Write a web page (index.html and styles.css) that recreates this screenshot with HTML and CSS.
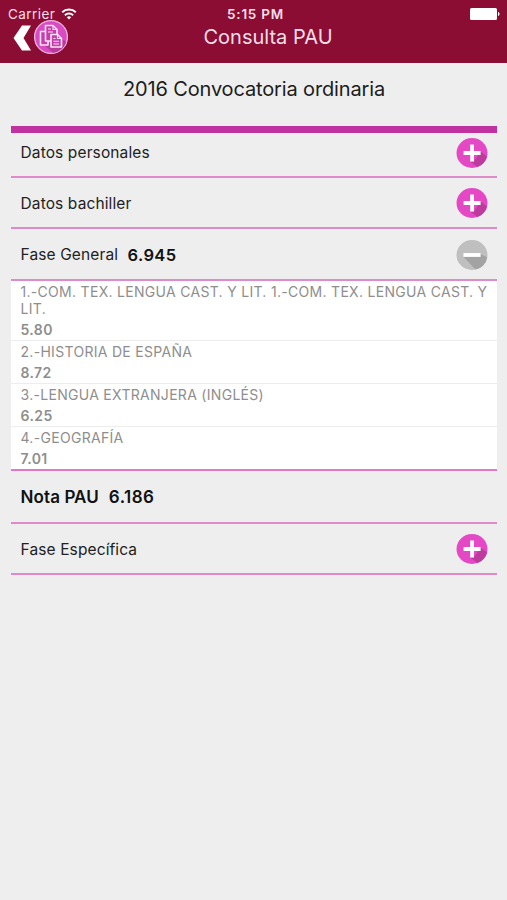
FILE: index.html
```html
<!DOCTYPE html>
<html lang="es">
<head>
<meta charset="utf-8">
<title>Consulta PAU</title>
<link rel="stylesheet" href="styles.css">
</head>
<body>
<svg width="0" height="0" class="defs" aria-hidden="true">
  <symbol id="plus" viewBox="0 0 32 32">
    <ellipse cx="16" cy="16" rx="15.500" ry="15" fill="#e548c5"/>
    <path d="M18 24.400 24.600 14.500 31 19.500A15.500 15 0 0 1 21.500 30L14.200 24.400Z" fill="#bd3b9d"/>
    <path d="M14.200 7.600h3.800v6.500h6.600v3.800H18v6.500h-3.800v-6.500H7.600v-3.800h6.600z" fill="#fff"/>
  </symbol>
  <symbol id="minus" viewBox="0 0 32 32">
    <ellipse cx="16" cy="16" rx="15.500" ry="15" fill="#bfbfbf"/>
    <path d="M7.500 18 24.500 15 31.200 18.200A15.500 15 0 0 1 19.500 30.600Z" fill="#a3a3a3"/>
    <path d="M7.400 14.100h17.200v3.800H7.400z" fill="#fff"/>
  </symbol>
</svg>
<header class="header">
  <div class="status">
    <div class="carrier">Carrier
      <svg class="wifi" viewBox="0 0 16 12"><g fill="none" stroke="#fff" stroke-width="1.900"><path d="M1.200 4.300a9.800 9.800 0 0 1 13.600 0"/><path d="M3.900 7.200a5.900 5.900 0 0 1 8.200 0"/></g><path d="M5.800 9.200a3.200 3.200 0 0 1 4.400 0L8 11.500z" fill="#fff"/></svg>
    </div>
    <div class="time">5:15 PM</div>
    <svg class="battery" viewBox="0 0 32 14"><rect x="1" y="1" width="27" height="12" rx="1.500" fill="#fff"/><path d="M29 5c2 .3 2 3.700 0 4z" fill="#fff"/></svg>
  </div>
  <div class="nav">
    <div class="back">
      <svg class="chevron" viewBox="0 0 18 26"><path d="M9 .5h9L10.500 13 18 25.500H9L.5 13z" fill="#fff"/></svg>
      <svg class="docs" viewBox="0 0 36 36">
        <circle cx="18" cy="18" r="16.400" fill="#d84bc2" stroke="#f1b5e2" stroke-width="1.300"/>
        <path d="M28 19 33.300 23A16 16 0 0 1 20 33.700L11 26z" fill="#b93a9d"/>
        <g fill="#c63eac" stroke="#fbe3f6" stroke-width="1.600" stroke-linejoin="round">
          <path d="M7.500 12.500H15V26H7.500z"/>
          <path d="M12.500 6.500h7.500l4 4V22H12.500z"/><path d="M20 6.500v4h4M15 10h3M15 13h5" fill="none" stroke-width="1.200"/>
          <path d="M18 15.500h6.500l4 4V28H18z"/><path d="M24.500 15.500v4h4M20.500 19.500h2M20.500 22.300h5.500M20.500 25h5.500" fill="none" stroke-width="1.100"/>
        </g>
      </svg>
    </div>
    <h1 class="title">Consulta PAU</h1>
  </div>
</header>
<main class="content">
  <h2 class="call">2016 Convocatoria ordinaria</h2>
  <section class="list">
    <div class="row row-first"><span>Datos personales</span><svg class="toggle"><use href="#plus"/></svg></div>
    <div class="row row-second"><span>Datos bachiller</span><svg class="toggle"><use href="#plus"/></svg></div>
    <div class="row"><span>Fase General</span><b class="score">6.945</b><svg class="toggle"><use href="#minus"/></svg></div>
    <ul class="subjects">
      <li class="subject"><div class="name name-long">1.-COM. TEX. LENGUA CAST. Y LIT. 1.-COM. TEX. LENGUA CAST. Y LIT.</div><div class="mark">5.80</div></li>
      <li class="subject"><div class="name">2.-HISTORIA DE ESPAÑA</div><div class="mark">8.72</div></li>
      <li class="subject"><div class="name">3.-LENGUA EXTRANJERA (INGLÉS)</div><div class="mark">6.25</div></li>
      <li class="subject"><div class="name">4.-GEOGRAFÍA</div><div class="mark">7.01</div></li>
    </ul>
    <div class="row row-total"><b>Nota PAU</b><b class="score">6.186</b></div>
    <div class="row row-last"><span>Fase Específica</span><svg class="toggle"><use href="#plus"/></svg></div>
  </section>
</main>
</body>
</html>
```
FILE: styles.css
```css
* { box-sizing: border-box; }
body {
  margin: 0;
  min-height: 900px;
  background: #eee;
  color: #222;
  font-family: Inter, "Liberation Sans", sans-serif;
}
.defs { position: absolute; }
.header {
  height: 63px;
  background: #8c0d33;
  border-bottom: 1px solid #8a1238;
  color: #f9dfe8;
}
.status {
  display: grid;
  grid-template-columns: 1fr auto 1fr;
  align-items: center;
  height: 21px;
  padding: 6px 6px 0 8px;
  font-size: 13px;
}
.carrier { display: flex; align-items: center; gap: 6px; font-size: 13.5px; letter-spacing: .45px; }
.wifi { width: 16px; height: 12px; }
.time { padding-left: 2px; font-size: 13.5px; font-weight: 600; letter-spacing: .75px; }
.battery { width: 32px; height: 14px; justify-self: end; }
.nav {
  display: grid;
  grid-template-columns: 1fr auto 1fr;
  align-items: center;
  height: 34px;
  padding: 0 13px;
}
.back { display: flex; align-items: center; gap: 2px; height: 32px; margin-top: -2px; }
.chevron { width: 18px; height: 26px; margin-top: 1px; }
.docs { width: 36px; height: 36px; }
.title { margin: -2px 0 0; padding-left: 29px; font-size: 20px; font-weight: 400; line-height: 28px; }
.content { padding: 0 10px 0 11px; }
.call { margin: 0; height: 63px; padding-top: 12px; text-align: center; font-size: 20px; line-height: 28px; font-weight: 400; letter-spacing: -.14px; color: #1c1c1c; }
.list { border-top: 7px solid #c032a0; }
.row {
  display: flex;
  align-items: center;
  height: 52px;
  padding: 1px 9px 0 9.5px;
  border-bottom: 2px solid #dd8bcb;
  font-size: 15.5px;
  letter-spacing: .12px;
}
.row-first { height: 45px; padding-bottom: 4px; }
.row-first span { margin-top: -2px; }
.row-second { height: 51px; }
.row-total { height: 53px; }
.row-last { height: 51px; }
.row b { font-weight: 600; font-size: 16.5px; color: #111; letter-spacing: .35px; }
.row .score { margin-left: 9.5px; }
.row-total b { font-size: 17px; letter-spacing: .1px; }
.row-total .score { margin-left: 10px; letter-spacing: .45px; }
.toggle { width: 32px; height: 32px; margin-left: auto; }
.subjects { margin: 0; padding: 0; list-style: none; background: #fff; border-bottom: 2px solid #dd79c8; color: #8e8e8e; }
.subject { padding: 2px 10px 0 9.5px; border-bottom: 1px solid #ededed; }
.subject:last-child { border-bottom: 0; }
.name { font-size: 14px; line-height: 17px; letter-spacing: .3px; }
.name-long { margin-right: -10px; }
.mark { font-size: 14px; line-height: 25px; margin-bottom: -2px; font-weight: 600; letter-spacing: .4px; }
```
